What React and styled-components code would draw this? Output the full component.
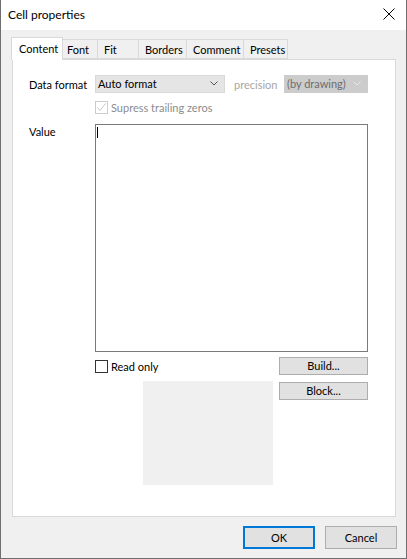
import React from 'react';
import styled, { createGlobalStyle } from 'styled-components';

const GlobalStyle = createGlobalStyle`
  html, body {
    margin: 0;
    padding: 0;
    background: #ffffff;
  }
  body {
    font-family: Lato, "Liberation Sans", sans-serif;
    font-size: 11px;
    color: #000;
  }
  * {
    box-sizing: border-box;
  }
`;

const Window = styled.div`
  width: 407px;
  height: 559px;
  display: flex;
  flex-direction: column;
  border: 1px solid #6f6f6f;
  border-top: none;
  background: #f0f0f0;
`;

const TitleBar = styled.div`
  height: 30px;
  background: #ffffff;
  display: flex;
  align-items: center;
  justify-content: space-between;
  padding: 0 10px 2px 7px;
  font-size: 12px;
`;

const CloseButton = styled.div`
  width: 14px;
  height: 14px;
  display: flex;
  align-items: center;
  justify-content: center;
`;

const Body = styled.div`
  flex: 1;
  display: flex;
  flex-direction: column;
  padding: 7px 10px 0 11px;
`;

const TabStrip = styled.div`
  display: flex;
  align-items: flex-end;
  height: 22px;
  padding-left: 1px;
  position: relative;
  z-index: 1;
`;

const Tab = styled.div`
  height: ${(p) => (p.$active ? '23px' : '20px')};
  margin: ${(p) => (p.$active ? '0 -2px -1px -2px' : '0')};
  padding: ${(p) => (p.$active ? '4px 0 0 7px' : '3px 0 0 6px')};
  width: ${(p) => p.$w}px;
  background: ${(p) => (p.$active ? '#ffffff' : '#f0f0f0')};
  border: 1px solid #d9d9d9;
  border-bottom: ${(p) => (p.$active ? 'none' : '1px solid #d9d9d9')};
  border-left: ${(p) => (p.$first || p.$active ? '1px solid #d9d9d9' : 'none')};
  position: relative;
  z-index: ${(p) => (p.$active ? 2 : 1)};
  white-space: nowrap;
`;

const Panel = styled.div`
  height: 458px;
  background: #ffffff;
  border: 1px solid #d9d9d9;
  padding: 15px 0 0 16px;
`;

const FormRow = styled.div`
  display: flex;
  align-items: ${(p) => p.$align || 'center'};
  margin-top: ${(p) => p.$mt || 0}px;
`;

const Label = styled.div`
  width: 66px;
  flex: none;
  padding-top: ${(p) => p.$pt || 0}px;
`;

const Select = styled.div`
  width: ${(p) => p.$w}px;
  height: 18px;
  flex: none;
  display: flex;
  align-items: center;
  justify-content: space-between;
  padding: 0 6px 1px 2px;
  background: ${(p) => (p.$disabled ? '#cccccc' : '#e5e5e5')};
  border: 1px solid ${(p) => (p.$disabled ? '#cccccc' : '#d9d9d9')};
  color: ${(p) => (p.$disabled ? '#6d6d6d' : '#000')};
`;

const MutedText = styled.div`
  width: 59px;
  flex: none;
  color: #a6a6a6;
  padding-left: 9px;
`;

const Controls = styled.div`
  width: 273px;
  display: flex;
  flex-direction: column;
`;

const CheckRow = styled.div`
  display: flex;
  align-items: center;
  gap: 3px;
  color: ${(p) => (p.$disabled ? '#8c8c8c' : '#000')};
`;

const Box = styled.div`
  width: 13px;
  height: 13px;
  border: 1px solid ${(p) => (p.$disabled ? '#cccccc' : '#333333')};
  background: #ffffff;
  display: flex;
  align-items: center;
  justify-content: center;
`;

const TextBox = styled.div`
  width: 273px;
  height: 228px;
  border: 1px solid #7a7a7a;
  padding: 2px 1px;
`;

const Caret = styled.div`
  width: 1px;
  height: 11px;
  background: #000;
`;

const SplitRow = styled.div`
  display: flex;
  align-items: ${(p) => p.$align || 'center'};
  justify-content: ${(p) => p.$justify || 'space-between'};
  gap: 6px;
  margin-top: ${(p) => p.$mt || 0}px;
`;

const Button = styled.div`
  width: ${(p) => p.$w || 89}px;
  height: ${(p) => p.$h || 18}px;
  flex: none;
  display: flex;
  align-items: center;
  justify-content: center;
  background: #e1e1e1;
  border: 1px solid ${(p) => (p.$default ? '#0078d7' : '#adadad')};
  box-shadow: ${(p) => (p.$default ? 'inset 0 0 0 1px #0078d7' : 'none')};
  padding-bottom: 1px;
  margin-top: ${(p) => p.$mt || 0}px;
`;

const Preview = styled.div`
  width: 130px;
  height: 104px;
  background: #f0f0f0;
`;

const Footer = styled.div`
  display: flex;
  justify-content: flex-end;
  gap: 10px;
  padding-top: 9px;
  margin-right: -1px;
`;

const Chevron = ({ color }) => (
  <svg width="8" height="5" viewBox="0 0 8 5">
    <polyline points="0.5,0.5 4,4 7.5,0.5" fill="none" stroke={color} strokeWidth="1" />
  </svg>
);

const tabs = [
  { name: 'Content', w: 52, active: true },
  { name: 'Font', w: 37 },
  { name: 'Fit', w: 41 },
  { name: 'Borders', w: 48 },
  { name: 'Comment', w: 57 },
  { name: 'Presets', w: 44 },
];

export default function App() {
  return (
    <>
      <GlobalStyle />
      <Window>
        <TitleBar>
          <span>Cell properties</span>
          <CloseButton>
            <svg width="12" height="12" viewBox="0 0 12 12">
              <path d="M0.5 0.5 L11.5 11.5 M11.5 0.5 L0.5 11.5" stroke="#000" strokeWidth="1" />
            </svg>
          </CloseButton>
        </TitleBar>
        <Body>
          <TabStrip>
            {tabs.map((t, i) => (
              <Tab key={t.name} $w={t.w} $active={t.active} $first={i === 0}>
                {t.name}
              </Tab>
            ))}
          </TabStrip>
          <Panel>
            <FormRow>
              <Label>Data format</Label>
              <Select $w={130}>
                <span>Auto format</span>
                <Chevron color="#555" />
              </Select>
              <MutedText>precision</MutedText>
              <Select $w={84} $disabled>
                <span>(by drawing)</span>
                <Chevron color="#e6e6e6" />
              </Select>
            </FormRow>
            <FormRow $mt={8}>
              <Label />
              <CheckRow $disabled>
                <Box $disabled>
                  <svg width="11" height="11" viewBox="0 0 11 11">
                    <polyline points="1.5,5.5 4,8.5 9.5,1.5" fill="none" stroke="#c6c6c6" strokeWidth="1" />
                  </svg>
                </Box>
                <span>Supress trailing zeros</span>
              </CheckRow>
            </FormRow>
            <FormRow $mt={10} $align="flex-start">
              <Label $pt={1}>Value</Label>
              <Controls>
                <TextBox>
                  <Caret />
                </TextBox>
                <SplitRow $mt={5}>
                  <CheckRow>
                    <Box />
                    <span>Read only</span>
                  </CheckRow>
                  <Button>Build...</Button>
                </SplitRow>
                <SplitRow $mt={6} $align="flex-start" $justify="flex-end">
                  <Preview />
                  <Button $mt={1}>Block...</Button>
                </SplitRow>
              </Controls>
            </FormRow>
          </Panel>
          <Footer>
            <Button $w={72} $h={23} $default>OK</Button>
            <Button $w={72} $h={23}>Cancel</Button>
          </Footer>
        </Body>
      </Window>
    </>
  );
}
